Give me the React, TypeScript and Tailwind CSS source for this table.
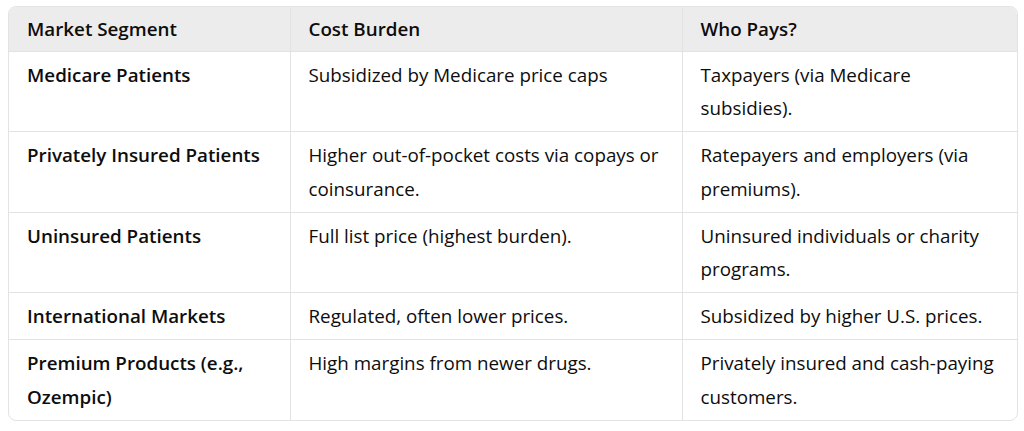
import React from "react";

const rows: { seg: React.ReactNode; cost: React.ReactNode; who: React.ReactNode }[] = [
  {
    seg: "Medicare Patients",
    cost: "Subsidized by Medicare price caps",
    who: (
      <>
        Taxpayers (via Medicare
        <br />
        subsidies).
      </>
    ),
  },
  {
    seg: "Privately Insured Patients",
    cost: (
      <>
        Higher out-of-pocket costs via copays or
        <br />
        coinsurance.
      </>
    ),
    who: (
      <>
        Ratepayers and employers (via
        <br />
        premiums).
      </>
    ),
  },
  {
    seg: "Uninsured Patients",
    cost: "Full list price (highest burden).",
    who: (
      <>
        Uninsured individuals or charity
        <br />
        programs.
      </>
    ),
  },
  {
    seg: "International Markets",
    cost: "Regulated, often lower prices.",
    who: "Subsidized by higher U.S. prices.",
  },
  {
    seg: (
      <>
        Premium Products (e.g.,
        <br />
        Ozempic)
      </>
    ),
    cost: "High margins from newer drugs.",
    who: (
      <>
        Privately insured and cash-paying
        <br />
        customers.
      </>
    ),
  },
];

export default function App() {
  return (
    <div
      className="w-[1024px] h-[431px] bg-white pt-[6px] pl-[8px]"
      style={{ fontFamily: '"Open Sans", "Noto Sans", sans-serif' }}
    >
      <div className="w-[1010px] rounded-[8px] border border-[#e3e3e3] overflow-hidden">
        <table className="w-full border-collapse table-fixed text-[18.8px] leading-[33.5px] text-[#0d0d0d]">
          <colgroup>
            <col className="w-[281px]" />
            <col className="w-[392px]" />
            <col className="w-[335px]" />
          </colgroup>
          <thead>
            <tr className="bg-[#ececec]">
              <th className="text-left font-semibold px-[18px] pt-[6px] pb-[4px] border-b border-[#e3e3e3]">
                Market Segment
              </th>
              <th className="text-left font-semibold px-[18px] pt-[6px] pb-[4px] border-b border-l border-[#e3e3e3]">
                Cost Burden
              </th>
              <th className="text-left font-semibold px-[18px] pt-[6px] pb-[4px] border-b border-l border-[#e3e3e3]">
                Who Pays?
              </th>
            </tr>
          </thead>
          <tbody>
            {rows.map((r, i) => (
              <tr key={i}>
                <td
                  className={`align-top whitespace-nowrap font-semibold px-[18px] pt-[7px] pb-[5.5px] ${
                    i < rows.length - 1 ? "border-b" : ""
                  } border-[#e3e3e3]`}
                >
                  {r.seg}
                </td>
                <td
                  className={`align-top whitespace-nowrap px-[18px] pt-[7px] pb-[5.5px] border-l ${
                    i < rows.length - 1 ? "border-b" : ""
                  } border-[#e3e3e3]`}
                >
                  {r.cost}
                </td>
                <td
                  className={`align-top whitespace-nowrap px-[18px] pt-[7px] pb-[5.5px] border-l ${
                    i < rows.length - 1 ? "border-b" : ""
                  } border-[#e3e3e3]`}
                >
                  {r.who}
                </td>
              </tr>
            ))}
          </tbody>
        </table>
      </div>
    </div>
  );
}
